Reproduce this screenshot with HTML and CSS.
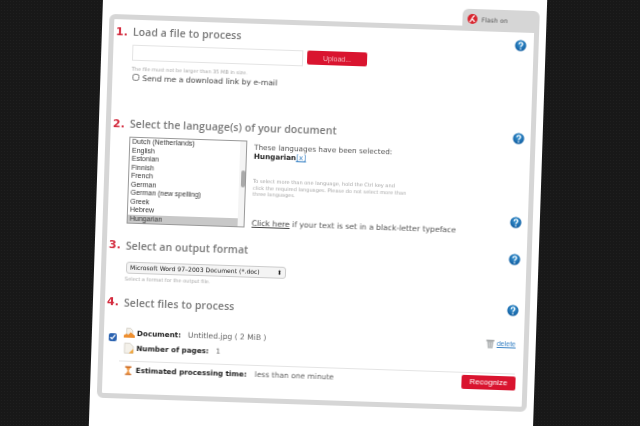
FILE: index.html
```html
<!DOCTYPE html>
<html lang="en">
<head>
    <meta charset="UTF-8">
    <meta name="viewport" content="width=device-width, initial-scale=1.0">
    <link rel="stylesheet" href="styles.css">
    <title>Online OCR</title>
</head>
<body>
    <div class="frame">
    <div class="page">
        <div class="tab-row">
            <div class="flash-tab">
                <svg class="flash-icon" viewBox="0 0 12 12"><circle cx="6" cy="6" r="6" fill="#d8262f"/><path d="M2.500 9.500c2.500 0 3-7 6-7.500M4.500 6.500c1.500-.5 3 .5 4 3" fill="none" stroke="#fff" stroke-width="1.500"/></svg>
                <span>Flash on</span>
            </div>
        </div>
        <div class="panel">
            <!-- step 1 -->
            <section class="step step-load">
                <div class="step-head">
                    <span class="num">1.</span>
                    <h2>Load a file to process</h2>
                    <svg class="help help-first" viewBox="0 0 12 12"><use href="#help"/></svg>
                </div>
                <div class="step-body">
                    <div class="upload-row">
                        <input type="text" class="file-input">
                        <button type="button" class="btn upload">Upload...</button>
                    </div>
                    <p class="hint">The file must not be larger than 35 MB in size.</p>
                    <label class="mail-row"><input type="checkbox"> Send me a download link by e-mail</label>
                </div>
            </section>

            <!-- step 2 -->
            <section class="step step-lang">
                <div class="step-head">
                    <span class="num">2.</span>
                    <h2>Select the language(s) of your document</h2>
                    <svg class="help" viewBox="0 0 12 12"><use href="#help"/></svg>
                </div>
                <div class="lang-row">
                    <div class="listbox">
                        <ul>
                            <li>Dutch (Netherlands)</li>
                            <li>English</li>
                            <li>Estonian</li>
                            <li>Finnish</li>
                            <li>French</li>
                            <li>German</li>
                            <li>German (new spelling)</li>
                            <li>Greek</li>
                            <li>Hebrew</li>
                            <li class="selected">Hungarian</li>
                        </ul>
                        <div class="scrollbar"><div class="thumb"></div></div>
                    </div>
                    <div class="lang-info">
                        <p class="chosen">These languages have been selected:<br><b>Hungarian</b><a href="#">[x]</a></p>
                        <p class="hint lang-hint">To select more than one language, hold the Ctrl key and<br>click the required languages. Please do not select more than<br>three languages.</p>
                        <div class="blackletter">
                            <p><a href="#" class="plain-link">Click here</a> if your text is set in a black-letter typeface</p>
                            <svg class="help help-letter" viewBox="0 0 12 12"><use href="#help"/></svg>
                        </div>
                    </div>
                </div>
            </section>

            <!-- step 3 -->
            <section class="step step-format">
                <div class="step-head">
                    <span class="num">3.</span>
                    <h2>Select an output format</h2>
                    <svg class="help" viewBox="0 0 12 12"><use href="#help"/></svg>
                </div>
                <div class="step-body">
                    <div class="select-box"><span>Microsoft Word 97–2003 Document (*.doc)</span><span class="arrows">⬍</span></div>
                    <p class="hint">Select a format for the output file.</p>
                </div>
            </section>

            <!-- step 4 -->
            <section class="step step-files">
                <div class="step-head">
                    <span class="num">4.</span>
                    <h2>Select files to process</h2>
                    <svg class="help help-up" viewBox="0 0 12 12"><use href="#help"/></svg>
                </div>
                <div class="file-row">
                    <input type="checkbox" class="file-check" checked>
                    <div class="file-info">
                        <div class="info-line">
                            <svg class="small-icon" viewBox="0 0 10 10"><path d="M2.500.5h3.500l2 2v3.500h-5.500z" fill="#f4f1ea" stroke="#c9c4b8" stroke-width=".6"/><path d="M0 9V6.800l2.500-1.300 1.500 1 2.200-2.500 3.800 3V9z" fill="#ee8f2f"/></svg>
                            <b>Document:</b><span class="value-doc">Untitled.jpg ( 2 MiB )</span>
                        </div>
                        <div class="info-line">
                            <svg class="small-icon" viewBox="0 0 10 10"><path d="M1 .5h5l3 3v6H1z" fill="#f4f1ea" stroke="#c9c4b8" stroke-width=".6"/><path d="M5 9.500l4-4v4z" fill="#f0a338"/></svg>
                            <b>Number of pages:</b><span>1</span>
                        </div>
                    </div>
                    <a href="#" class="delete">
                        <svg class="trash-icon" viewBox="0 0 10 10"><path d="M1.500 2h7l-.8 8H2.300z" fill="#b4b7b8"/><path d="M.5 1.500h9" stroke="#8a8d8e" stroke-width="1.300"/><path d="M3.800 3.500v5M6.200 3.500v5" stroke="#dcdedf" stroke-width=".7"/></svg>
                        delete
                    </a>
                </div>
                <div class="time-row">
                    <div class="info-line">
                        <svg class="glass-icon" viewBox="0 0 8 10"><path d="M.5 0h7v1.500h-7zM.5 8.500h7V10h-7z" fill="#c9651c"/><path d="M1.500 1.500h5L4.600 5l1.900 3.500h-5L3.400 5z" fill="#f09a48"/></svg>
                        <b>Estimated processing time:</b><span class="value-time">less than one minute</span>
                    </div>
                    <button type="button" class="btn recognize">Recognize</button>
                </div>
            </section>
        </div>
    </div>
    </div>

    <svg class="defs" width="0" height="0">
        <defs>
            <radialGradient id="blue" cx="50%" cy="35%" r="65%">
                <stop offset="0" stop-color="#3f9ad6"/>
                <stop offset="1" stop-color="#0d5a9e"/>
            </radialGradient>
            <g id="help">
                <circle cx="6" cy="6" r="5.600" fill="url(#blue)"/>
                <path d="M4.200 4.700c0-2.300 3.700-2.300 3.700-.2 0 1.400-1.900 1.400-1.900 3" fill="none" stroke="#fff" stroke-width="1.300"/>
                <circle cx="6" cy="9.200" r=".8" fill="#fff"/>
            </g>
        </defs>
    </svg>
</body>
</html>
```

FILE: styles.css
```css
html, body {
    height: 100%;
    margin: 0;
    overflow: hidden;
}

body {
    background-color: #191919;
    font-family: "DejaVu Sans", sans-serif;
    color: #333;
}

.frame {
    height: 426px;
    overflow: hidden;
    background-color: #181818;
    background-image: radial-gradient(#1f1f1f 0.7px, transparent 1px);
    background-size: 3px 3px;
}

.defs {
    position: absolute;
}

/* the whole page is photographed slightly turned */
.page {
    box-sizing: border-box;
    width: 444px;
    height: 500px;
    margin: -30px 0 0 96px;
    padding: 34px 7px 0;
    background: #fff;
    transform: rotate(1.9deg);
    transform-origin: 224px 243px;
    filter: blur(0.45px);
}

.tab-row {
    display: flex;
    justify-content: flex-end;
}

.flash-tab {
    box-sizing: border-box;
    width: 77px;
    height: 17px;
    padding: 3px 0 0 5px;
    display: flex;
    align-items: center;
    gap: 4px;
    background: #d6d6d6;
    border-radius: 6px 6px 0 0;
    font-size: 6.300px;
    color: #555;
}

.flash-icon {
    width: 10px;
    height: 10px;
}

.panel {
    box-sizing: border-box;
    height: 384px;
    background: #fff;
    border: 5px solid #d6d6d6;
    border-radius: 6px;
    border-top-right-radius: 0;
    padding: 0 8px 0 2px;
}

.step-head {
    display: flex;
    align-items: center;
    height: 14px;
}

.num {
    width: 17px;
    font-size: 11px;
    font-weight: bold;
    color: #d3293c;
}

h2 {
    flex: 1;
    margin: 0;
    font-family: "Open Sans", sans-serif;
    font-size: 10.500px;
    font-weight: 600;
    letter-spacing: 0.08px;
    color: #777;
}

.help {
    width: 12px;
    height: 12px;
    margin: 3px -2px 0 0;
}

.help-first {
    margin: 2px -1px 0 0;
}

.help-up {
    margin-top: -9px;
}

.help-letter {
    margin-top: -5px;
}

.step-body {
    margin-left: 17px;
}

.hint {
    margin: 0;
    font-size: 5px;
    line-height: 8px;
    color: #a5a5a5;
}

.step-load {
    padding-top: 5px;
}

.upload-row {
    display: flex;
    gap: 4px;
    margin-top: 6px;
}

.file-input {
    box-sizing: border-box;
    width: 171px;
    height: 16px;
    border: 1px solid #e4e4e4;
    background: #fff;
    padding: 0;
}

.btn {
    border: none;
    border-radius: 2px;
    background: #d9142f;
    color: #fff;
    font-family: "Liberation Sans", sans-serif;
    padding: 0;
}

.upload {
    width: 60px;
    height: 14px;
    font-size: 7px;
    color: #f4b9c0;
}

.step-load .hint {
    margin-top: 4px;
}

.mail-row {
    display: flex;
    align-items: center;
    gap: 3px;
    margin: 0.5px 0 0 1px;
    font-size: 7.700px;
    line-height: 10px;
    color: #444;
}

.mail-row input {
    width: 7px;
    height: 7px;
    margin: -2px 0 0;
}

.step-lang {
    margin-top: 33.500px;
}

.lang-row {
    display: flex;
    margin: 6px 0 0 17px;
}

.listbox {
    box-sizing: border-box;
    display: flex;
    width: 118px;
    height: 87px;
    border: 1px solid #999;
    background: #fff;
    overflow: hidden;
}

.listbox ul {
    flex: 1;
    margin: 0;
    padding: 0;
    list-style: none;
    font-family: "Liberation Sans", sans-serif;
    font-size: 7px;
    line-height: 8.500px;
    color: #333;
}

.listbox li {
    padding-left: 2px;
}

.listbox .selected {
    background: #c8c8c8;
}

.scrollbar {
    width: 6px;
    padding-top: 29px;
    background: #f4f4f4;
}

.thumb {
    width: 4px;
    height: 17px;
    margin-left: 2px;
    background: #a9a9a9;
    border-radius: 2px;
}

.lang-info {
    flex: 1;
    margin-left: 7px;
    display: flex;
    flex-direction: column;
}

.chosen {
    margin: 2px 0 0;
    font-size: 7.300px;
    line-height: 9px;
    color: #555;
}

.chosen b {
    color: #222;
    font-size: 7.200px;
}

.chosen a {
    color: #3d85c6;
}

.lang-hint {
    margin-top: 17px;
    font-size: 5.050px;
    line-height: 6.500px;
}

.blackletter {
    display: flex;
    justify-content: space-between;
    align-items: flex-start;
    margin-top: 15px;
}

.blackletter p {
    margin: 6px 0 0;
    font-size: 7.700px;
    line-height: 10px;
    color: #555;
}

.plain-link {
    color: #444;
}

.step-format {
    margin-top: 14px;
}

.select-box {
    box-sizing: border-box;
    display: flex;
    justify-content: space-between;
    align-items: center;
    width: 160px;
    height: 12px;
    margin: 9px 0 0 1px;
    padding: 0 3px;
    border: 1px solid #ccc;
    border-radius: 3px;
    background: #f4f4f4;
    font-size: 6.100px;
    color: #222;
}

.arrows {
    font-size: 6px;
}

.step-format .hint {
    margin-top: 1px;
}

.step-files {
    margin-top: 13px;
}

.file-row {
    display: flex;
    align-items: flex-start;
    margin-top: 18px;
    padding-bottom: 6px;
}

.file-check {
    width: 8px;
    height: 8px;
    margin: 6px 7px 0 3px;
    accent-color: #2a62b0;
}

.file-info {
    flex: 1;
    display: flex;
    flex-direction: column;
    gap: 3px;
}

.info-line {
    display: flex;
    align-items: center;
    height: 12px;
    font-size: 7.200px;
    color: #666;
}

.info-line b {
    margin-right: 7px;
    color: #222;
}

.value-doc {
    font-size: 7.600px;
}

.value-time {
    margin-left: 1px;
    font-size: 7.500px;
}

.small-icon {
    width: 11px;
    height: 11px;
    margin-right: 2px;
}

.glass-icon {
    width: 7px;
    height: 10px;
    margin-right: 4px;
}

.trash-icon {
    width: 9px;
    height: 10px;
    margin-right: 2px;
}

.delete {
    display: flex;
    align-items: center;
    margin-top: -1px;
    font-family: "Liberation Sans", sans-serif;
    font-size: 7px;
    color: #3d85c6;
}

.time-row {
    display: flex;
    justify-content: space-between;
    align-items: center;
    margin: 0 0 0 14px;
    padding: 2px 0 0 6px;
    border-top: 1px solid #e4e4e4;
}

.recognize {
    width: 54px;
    height: 14px;
    margin-right: -1px;
    font-size: 8px;
}
```
